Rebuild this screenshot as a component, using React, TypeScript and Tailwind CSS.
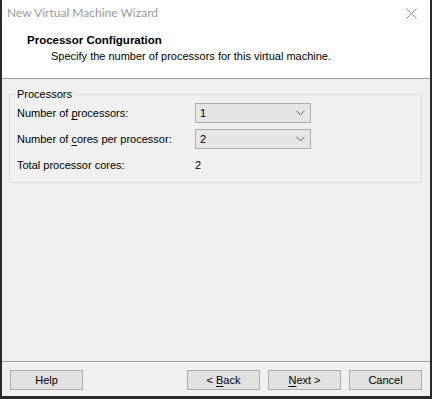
import React from "react";

const font = { fontFamily: '"Liberation Sans", Arial, sans-serif' };
const titleFont = { fontFamily: 'Lato, "Liberation Sans", sans-serif' };

function Combo({ value }: { value: string }) {
  return (
    <div className="w-[116px] h-[20px] bg-[#e5e5e5] border border-[#adadad] flex items-center pl-[4px] pr-[5px]">
      <span className="flex-1 text-[11px] leading-[16px] text-black">{value}</span>
      <svg width="9" height="6" viewBox="0 0 9 6" className="block">
        <path d="M0.5 0.8 L4.5 4.8 L8.5 0.8" fill="none" stroke="#606060" strokeWidth="1" />
      </svg>
    </div>
  );
}

function Btn({ children }: { children: React.ReactNode }) {
  return (
    <div className="w-[73px] h-[20px] bg-[#e1e1e1] border border-[#adadad] flex items-center justify-center text-[11px] leading-[16px] text-black whitespace-nowrap">
      {children}
    </div>
  );
}

export default function App() {
  return (
    <div className="w-[432px] h-[399px] bg-[#2b2b2b] pl-[2px] pr-[2px] pb-[3px] flex" style={font}>
      <div className="flex-1 flex flex-col bg-[#f0f0f0]">
        <div className="h-[79px] bg-white border-b border-[#a0a0a0] flex flex-col">
          <div className="h-[26px] flex items-center pl-[5px] pr-[13px]" style={titleFont}>
            <span className="flex-1 text-[12px] leading-[16px] text-[#999999] whitespace-nowrap">New Virtual Machine Wizard</span>
            <svg width="11" height="11" viewBox="0 0 11 11" className="block">
              <path d="M0.5 0.5 L10.5 10.5 M10.5 0.5 L0.5 10.5" stroke="#8a8a8a" strokeWidth="1" fill="none" />
            </svg>
          </div>
          <div className="mt-[6px] pl-[25px] text-[11.5px] leading-[16px] font-bold text-black whitespace-nowrap">Processor Configuration</div>
          <div className="pl-[49px] text-[11px] leading-[16px] text-black whitespace-nowrap">
            Specify the number of processors for this virtual machine.
          </div>
        </div>
        <div className="flex-1 flex flex-col">
          <fieldset className="mt-[7px] ml-[7px] mr-[8px] border border-[#dcdcdc] pl-[7px] pb-[9px]">
            <legend className="-ml-[2px] px-[2px] text-[11px] leading-[16px] text-black">Processors</legend>
            <div className="mt-[1px] flex items-center h-[20px] text-[11px] leading-[16px] text-black">
              <span className="w-[178px] whitespace-nowrap">
                Number of <span className="underline underline-offset-2">p</span>rocessors:
              </span>
              <Combo value="1" />
            </div>
            <div className="mt-[6px] flex items-center h-[20px] text-[11px] leading-[16px] text-black">
              <span className="w-[178px] whitespace-nowrap">
                Number of <span className="underline underline-offset-2">c</span>ores per processor:
              </span>
              <Combo value="2" />
            </div>
            <div className="mt-[8px] flex items-center h-[16px] text-[11px] leading-[16px] text-black">
              <span className="w-[178px] whitespace-nowrap">Total processor cores:</span>
              <span>2</span>
            </div>
          </fieldset>
        </div>
        <div className="border-t border-[#a0a0a0] pt-[8px] pb-[6px] pl-[8px] pr-[8px] flex">
          <Btn>Help</Btn>
          <div className="flex-1" />
          <div className="flex gap-[8px]">
            <Btn>
              &lt;&nbsp;<span className="underline underline-offset-2">B</span>ack
            </Btn>
            <Btn>
              <span className="underline underline-offset-2">N</span>ext &gt;
            </Btn>
            <Btn>Cancel</Btn>
          </div>
        </div>
      </div>
    </div>
  );
}
